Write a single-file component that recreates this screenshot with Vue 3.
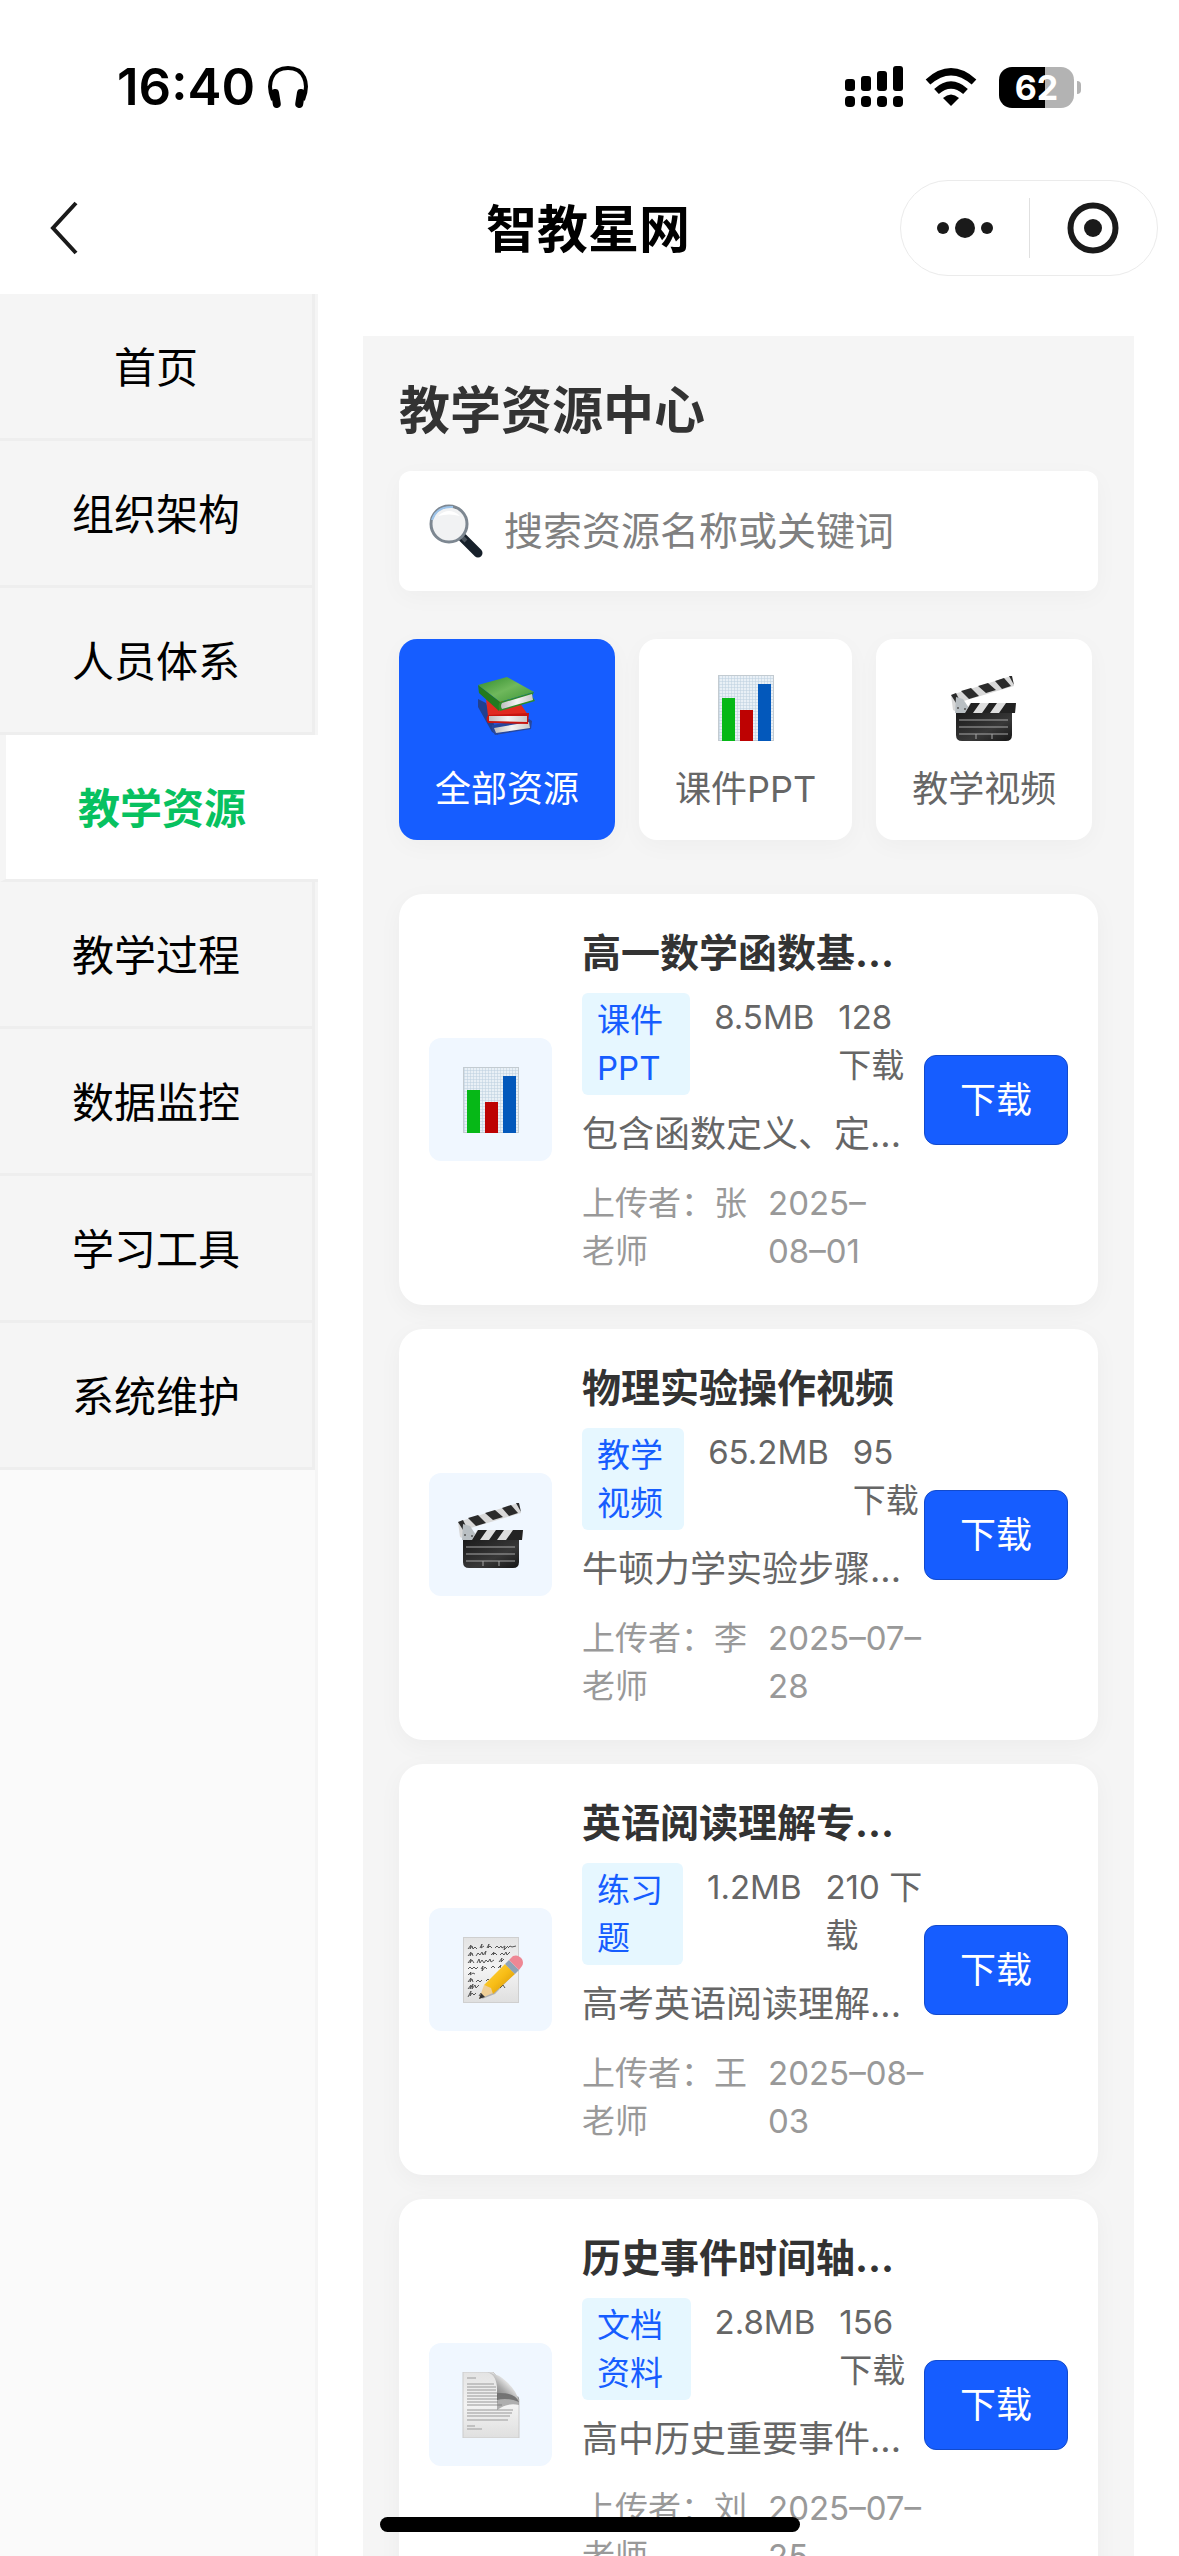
<template>
  <div class="app">
    <!-- shared emoji style icons -->
    <svg class="sprite" aria-hidden="true">
      <defs>
        <linearGradient id="bookGreen" x1="0" y1="0" x2="1" y2="1">
          <stop offset="0" stop-color="#2f8a2b" />
          <stop offset="0.5" stop-color="#6fb85c" />
          <stop offset="1" stop-color="#3c9434" />
        </linearGradient>
        <linearGradient id="pages" x1="0" y1="0" x2="1" y2="0">
          <stop offset="0" stop-color="#bdbdbd" />
          <stop offset="0.5" stop-color="#f4f4f4" />
          <stop offset="1" stop-color="#c8c8c8" />
        </linearGradient>
        <linearGradient id="slate" x1="0" y1="0" x2="1" y2="1">
          <stop offset="0" stop-color="#1b1b1b" />
          <stop offset="0.6" stop-color="#383838" />
          <stop offset="1" stop-color="#161616" />
        </linearGradient>
        <linearGradient id="paper" x1="0" y1="0" x2="0" y2="1">
          <stop offset="0" stop-color="#e3e3e3" />
          <stop offset="0.5" stop-color="#f3f3f3" />
          <stop offset="1" stop-color="#dfdfdf" />
        </linearGradient>
        <linearGradient id="curl" x1="0" y1="1" x2="1" y2="0">
          <stop offset="0" stop-color="#4c4c4c" />
          <stop offset="0.45" stop-color="#a8a8a8" />
          <stop offset="0.7" stop-color="#f4f4f4" />
          <stop offset="1" stop-color="#cfcfcf" />
        </linearGradient>
        <linearGradient id="pencil" x1="0" y1="0" x2="1" y2="1">
          <stop offset="0" stop-color="#ffd84a" />
          <stop offset="0.5" stop-color="#f8bd16" />
          <stop offset="1" stop-color="#c98a08" />
        </linearGradient>
        <pattern id="grid" width="3" height="3" patternUnits="userSpaceOnUse">
          <rect width="3" height="3" fill="#e9f0f6" />
          <path d="M0 0H3M0 0V3" stroke="#bccfdf" stroke-width="1" />
        </pattern>
      </defs>
      <symbol id="icon-books" viewBox="0 0 66 66">
        <path d="M4 24L12 28L24 60L18 57L4 32Z" fill="#21408f" />
        <path d="M12 48L18 50L55 44L58 46L57 54L21 60Q17 55 18 50Z" fill="#27479b" />
        <path d="M20 53L55 47L56 53L22 58Z" fill="url(#pages)" />
        <path d="M12 24L46 28L54 40L14 41Z" fill="#e02a20" />
        <path d="M14 40L55 38L54 49L14 48Q11 44 14 40Z" fill="#c8150f" />
        <path d="M15 41L53 41L53 47L15 46Z" fill="url(#pages)" />
        <path d="M4 10L33 2L60 17L26 27Z" fill="url(#bookGreen)" />
        <path d="M4 10L26 27L25 36L5 18Z" fill="#237a20" />
        <path d="M26 27L60 17L58 21L61 26L26 36Q23 31 26 27Z" fill="#2d8a28" />
        <path d="M28 28L58 19L59 25L28 34Q26 31 28 28Z" fill="url(#pages)" />
      </symbol>
      <symbol id="icon-chart" viewBox="0 0 66 66">
        <rect x="5" width="56" height="66" fill="url(#grid)" />
        <rect x="5.5" y="0.5" width="55" height="65" fill="none" stroke="#c3cbd1" />
        <rect x="9" y="23" width="13" height="43" fill="#06b817" />
        <rect x="27" y="35" width="13" height="31" fill="#bd0202" />
        <rect x="45" y="9" width="13" height="57" fill="#0358bb" />
      </symbol>
      <symbol id="icon-clapper" viewBox="0 0 66 66">
        <path d="M0 20L60 1L63 11L6 28L4 36L2 35Z" fill="#d8d8d8" />
        <path d="M0 20L5 18L9 26L5 28ZM10 16L20 13L28 21L18 24ZM27 11L37 8L45 15L35 18ZM44 6L53 3L60 11L51 14ZM58 1L61 1L63 10Z" fill="#2b2b2b" />
        <path d="M5 22L12 24L18 33L17 38H4Z" fill="#b9bfc3" />
        <circle cx="7" cy="33" r="1" fill="#555" />
        <circle cx="14" cy="34" r="1" fill="#555" />
        <path d="M14 38L19 28H65L64 38Z" fill="#dedede" />
        <path d="M14 38L20 28H29L22 38ZM31 38L38 28H46L39 38ZM48 38L55 28H65L64 38Z" fill="#222" />
        <path d="M5 38H61V60Q61 66 55 66H11Q5 66 5 60Z" fill="url(#slate)" />
        <path d="M8 45H57M8 52H57M8 59H57M25 59V64M41 59V64" stroke="#a6a6a6" stroke-width="1" fill="none" />
      </symbol>
      <symbol id="icon-memo" viewBox="0 0 66 66">
        <rect x="5.5" y="0.5" width="55" height="65" fill="url(#paper)" stroke="#cfcfcf" />
        <path
          d="M10 12l3-4l-1 4l2-3l1 3l2-2l2 2M22 11l2-4l-1 4l3-2M29 11l2-4l-1 4l2-2l2 2M37 11l2-2l2 2l2-2l1 2l3-2l-1 4l4-4M50 11l2-2l2 1l4-1
          M10 19l3-4l-1 4l2-3l1 3M18 19l2-3l2 2l2-3l1 3l3-4l-1 4M33 18l3-3l-1 3l2-2l2 2M42 18l2-2l2 2l2-3l1 3l3-3
          M10 26l3-4l-1 4l2-3l2 3M19 26l2-4l1 4l2-3l2 3l2-3l2 2l2-3l1 3l3-2M41 25l3-4l-1 4l3-3
          M10 32l2-2l2 2l2-2l2 2l2-2M23 32l2-3l-1 5l3-4l2 2M33 31l2-2l2 2M40 31l3-3l-1 3
          M10 38l3-3l-1 3l3-2l2 1
          M10 45l3-4l-1 4l2-3l1 3M18 45l2-2l2 2l2-2M28 44l2-2l2 2
          M10 52l3-4l-1 4l3-5l-1 5l3-4l1 3l3-3M42 51l3-3l2 3
          M10 60l3-6l-1 5l2-3l2 2l2-2M21 59l2-3l2 2"
          fill="none"
          stroke="#555"
          stroke-width="1"
        />
        <path d="M24 62L30 47L51 25L60 33L37 57Z" fill="#000" opacity="0.22" />
        <path d="M21 62L26 48L34 50L35 56Z" fill="#efcf97" />
        <path d="M21 62L23 56L27 60Z" fill="#333" />
        <path d="M26 48L47 27L57 37L35 57L33 51Z" fill="url(#pencil)" />
        <path d="M47 27L51 23L61 33L57 37Z" fill="#8fa3b6" />
        <path d="M51 23L55 19Q60 17 64 22Q66 26 64 29L61 33Z" fill="#ee8794" />
      </symbol>
      <symbol id="icon-doc" viewBox="0 0 66 66">
        <path d="M5 0H35L61 27V66H5Z" fill="url(#paper)" stroke="#cbcbcb" stroke-width="1" />
        <path d="M9 6H18M9 12H36M9 15H38M9 18H38M9 21H39M9 24H40M9 27H40M9 30H40M9 33H44M9 38H55M9 41H54M9 44H52M9 48H50M9 54H17M9 57H24" stroke="#b5b5b5" stroke-width="1.4" fill="none" />
        <path d="M39 16L61 25V33Q50 30 39 38Z" fill="#777" opacity="0.55" />
        <path d="M29 0Q40 3 39 21Q57 20 61 30Q59 19 49 10Q41 2 29 0Z" fill="url(#curl)" />
        <path d="M39 21Q57 20 61 30Q49 25 39 28Z" fill="#5b5b5b" opacity="0.7" />
      </symbol>
    </svg>

    <header class="top">
      <div class="status-bar">
        <div class="status-left">
          <span class="time">16:40</span>
          <svg class="headphones" viewBox="0 0 42 44" aria-hidden="true">
            <path d="M6 35C-1 18 5 3 21 3S43 18 36 35" fill="none" stroke="#000" stroke-width="4" />
            <rect x="5" y="24" width="8" height="19" rx="4" transform="rotate(-9 9 34)" />
            <rect x="29" y="24" width="8" height="19" rx="4" transform="rotate(9 33 34)" />
          </svg>
        </div>
        <div class="status-right">
          <svg class="signal" viewBox="0 0 58 42" aria-hidden="true">
            <rect x="0" y="13" width="10" height="12" rx="3" />
            <rect x="16" y="10" width="10" height="15" rx="3" />
            <rect x="32" y="5" width="10" height="20" rx="3" />
            <rect x="48" y="0" width="10" height="25" rx="3" />
            <rect x="0" y="30" width="10" height="11" rx="4" />
            <rect x="16" y="30" width="10" height="11" rx="4" />
            <rect x="32" y="30" width="10" height="11" rx="4" />
            <rect x="48" y="30" width="10" height="11" rx="4" />
          </svg>
          <svg class="wifi" viewBox="0 0 52 38" aria-hidden="true">
            <path d="M26 38L18 30Q26 23 34 30Z" />
            <path d="M11.500 23.500Q26 10.500 40.500 23.500" fill="none" stroke="#000" stroke-width="7" />
            <path d="M3 14Q26 -6.500 49 14" fill="none" stroke="#000" stroke-width="7" />
          </svg>
          <div class="battery">
            <span class="battery-level">62</span>
            <i class="battery-tip"></i>
          </div>
        </div>
      </div>

      <div class="nav-bar">
        <button class="back-btn" aria-label="返回">
          <svg viewBox="0 0 30 54" aria-hidden="true">
            <path d="M28 2L5 27L28 52" fill="none" stroke="#1a1a1a" stroke-width="4" />
          </svg>
        </button>
        <h1 class="nav-title">智教星网</h1>
        <div class="capsule">
          <button class="capsule-btn" aria-label="更多">
            <svg class="dots" viewBox="0 0 56 20" aria-hidden="true">
              <circle cx="6" cy="10" r="6" />
              <circle cx="28" cy="10" r="10" />
              <circle cx="50" cy="10" r="6" />
            </svg>
          </button>
          <span class="divider"></span>
          <button class="capsule-btn" aria-label="关闭">
            <svg class="ring" viewBox="0 0 52 52" aria-hidden="true">
              <circle cx="26" cy="26" r="22.500" fill="none" stroke="#1a1a1a" stroke-width="6" />
              <circle cx="26" cy="26" r="9" />
            </svg>
          </button>
        </div>
      </div>
    </header>

    <div class="body">
      <nav class="sidebar">
        <button
          v-for="item in menu"
          :key="item"
          class="menu-item"
          :class="{ active: item === currentMenu }"
          @click="currentMenu = item"
        >
          {{ item }}
        </button>
      </nav>

      <main class="content">
        <section class="panel">
          <h2 class="panel-title">教学资源中心</h2>

          <label class="search-box">
            <svg class="search-icon" viewBox="0 0 54 54" aria-hidden="true">
              <path d="M34 34L49 49" stroke="#17202a" stroke-width="9" stroke-linecap="round" />
              <path d="M31 31L37 37" stroke="#4b545d" stroke-width="4" />
              <circle cx="20" cy="20" r="18" fill="#f1f2f3" stroke="#7d8791" stroke-width="3" />
              <path d="M3 16Q8 2 24 3" fill="none" stroke="#9dc4ea" stroke-width="2" />
              <path d="M9 12Q20 2 31 12Q20 9 9 12Z" fill="#fff" />
            </svg>
            <input v-model="keyword" class="search-input" type="text" placeholder="搜索资源名称或关键词" aria-label="搜索资源" />
          </label>

          <div class="tabs">
            <button
              v-for="tab in tabs"
              :key="tab.name"
              class="tab"
              :class="{ active: tab.name === currentTab }"
              @click="currentTab = tab.name"
            >
              <svg class="emoji" aria-hidden="true"><use :href="'#icon-' + tab.icon" /></svg>
              <span>{{ tab.name }}</span>
            </button>
          </div>

          <div class="list">
            <article v-for="res in resources" :key="res.title" class="card">
              <div class="thumb">
                <svg class="emoji" aria-hidden="true"><use :href="'#icon-' + res.icon" /></svg>
              </div>
              <div class="info">
                <h3 class="title">{{ res.title }}</h3>
                <div class="meta">
                  <span class="tag">{{ res.type }}</span>
                  <span>{{ res.size }}</span>
                  <span class="downloads">{{ res.downloads }} 下载</span>
                </div>
                <p class="desc">{{ res.desc }}</p>
                <div class="foot">
                  <span class="uploader">上传者：{{ res.uploader }}</span>
                  <span class="date">{{ res.date }}</span>
                </div>
              </div>
              <button class="download-btn">下载</button>
            </article>
          </div>
        </section>
      </main>
    </div>

    <div class="home-indicator"></div>
  </div>
</template>

<script setup>
import { ref } from "vue";

const menu = ["首页", "组织架构", "人员体系", "教学资源", "教学过程", "数据监控", "学习工具", "系统维护"];
const currentMenu = ref("教学资源");

const keyword = ref("");

const tabs = [
  { name: "全部资源", icon: "books" },
  { name: "课件PPT", icon: "chart" },
  { name: "教学视频", icon: "clapper" }
];
const currentTab = ref("全部资源");

const resources = ref([
  {
    title: "高一数学函数基...",
    type: "课件PPT",
    icon: "chart",
    size: "8.5MB",
    downloads: 128,
    desc: "包含函数定义、定...",
    uploader: "张老师",
    date: "2025–\n08–01"
  },
  {
    title: "物理实验操作视频",
    type: "教学视频",
    icon: "clapper",
    size: "65.2MB",
    downloads: 95,
    desc: "牛顿力学实验步骤...",
    uploader: "李老师",
    date: "2025–07–\n28"
  },
  {
    title: "英语阅读理解专...",
    type: "练习题",
    icon: "memo",
    size: "1.2MB",
    downloads: 210,
    desc: "高考英语阅读理解...",
    uploader: "王老师",
    date: "2025–08–\n03"
  },
  {
    title: "历史事件时间轴...",
    type: "文档资料",
    icon: "doc",
    size: "2.8MB",
    downloads: 156,
    desc: "高中历史重要事件...",
    uploader: "刘老师",
    date: "2025–07–\n25"
  }
]);
</script>

<style>
body {
  margin: 0;
  background: #fff;
}
</style>

<style scoped>
*,
*::before,
*::after {
  box-sizing: border-box;
}

.app {
  display: flex;
  flex-direction: column;
  height: 100vh;
  overflow: hidden;
  background: #fff;
  color: #000;
  font-family: Inter, "Noto Sans CJK SC", sans-serif;
}

.sprite {
  position: absolute;
  width: 0;
  height: 0;
}

button {
  border: none;
  padding: 0;
  background: none;
  font-family: inherit;
  color: inherit;
  cursor: pointer;
}

h1,
h2,
h3,
p {
  margin: 0;
}

svg {
  display: block;
  flex: none;
}

/* status bar */
.status-bar {
  display: flex;
  justify-content: space-between;
  align-items: center;
  height: 174px;
  padding: 0 98px 0 117px;
}

.status-left,
.status-right {
  display: flex;
  align-items: center;
}

.status-left {
  gap: 12px;
}

.status-right {
  gap: 22px;
}

.time {
  font-size: 51px;
  line-height: 60px;
  font-weight: 600;
}

.headphones {
  width: 42px;
  height: 44px;
}

.signal {
  width: 58px;
  height: 42px;
}

.wifi {
  width: 52px;
  height: 38px;
}

.battery {
  display: flex;
  align-items: center;
  gap: 3px;
}

.battery-level {
  width: 75px;
  height: 41px;
  border-radius: 13px;
  background: linear-gradient(90deg, #000 62%, #b3b3b3 62%);
  color: #fff;
  font-size: 34px;
  line-height: 41px;
  font-weight: 700;
  text-align: center;
}

.battery-tip {
  width: 4px;
  height: 13px;
  border-radius: 0 4px 4px 0;
  background: #b3b3b3;
}

/* nav bar */
.nav-bar {
  display: grid;
  grid-template-columns: 1fr auto 1fr;
  align-items: center;
  height: 120px;
  padding: 0 21px 12px 48px;
}

.back-btn {
  justify-self: start;
}

.back-btn svg {
  width: 30px;
  height: 54px;
}

.nav-title {
  padding: 3px 30px 0 0;
  font-size: 51px;
  line-height: 60px;
  font-weight: 700;
}

.capsule {
  display: flex;
  align-items: center;
  justify-self: end;
  width: 258px;
  height: 96px;
  border: 1px solid #ebebeb;
  border-radius: 48px;
}

.capsule-btn {
  display: flex;
  flex: 1;
  justify-content: center;
}

.capsule svg {
  fill: #1a1a1a;
}

.dots {
  width: 56px;
  height: 20px;
}

.ring {
  width: 52px;
  height: 52px;
}

.divider {
  width: 1px;
  height: 60px;
  background: #e0e0e0;
}

/* page body */
.body {
  display: flex;
  flex: 1;
  min-height: 0;
}

.sidebar {
  display: flex;
  flex-direction: column;
  align-items: stretch;
  flex: none;
  width: 318px;
  background: #fafafa;
  border-right: 3px solid #f5f5f5;
}

.menu-item {
  height: 147px;
  padding-top: 3px;
  background: #f5f5f5;
  border-right: 3px solid #eee;
  border-bottom: 3px solid #eee;
  font-size: 42px;
  line-height: 60px;
}

.menu-item.active {
  margin-right: -3px;
  background: #fff;
  border-left: 6px solid #f5f5f5;
  border-right: none;
  color: #07c160;
  font-weight: 700;
}

.content {
  flex: 1;
  min-width: 0;
  padding: 42px 45px 0;
  overflow-y: auto;
  scrollbar-width: none;
}

.panel {
  padding: 36px;
  background: #f5f5f5;
}

.panel-title {
  color: #333;
  font-size: 51px;
  line-height: 78px;
  font-weight: 700;
}

.search-box {
  display: flex;
  align-items: center;
  gap: 21px;
  height: 120px;
  margin-top: 21px;
  padding: 0 30px;
  border-radius: 12px;
  background: #fff;
  box-shadow: 0 6px 24px rgba(0, 0, 0, 0.03);
}

.search-icon {
  width: 54px;
  height: 54px;
}

.search-input {
  flex: 1;
  min-width: 0;
  padding: 0;
  border: none;
  outline: none;
  background: transparent;
  font-family: inherit;
  font-size: 39px;
  line-height: 54px;
}

.search-input::placeholder {
  color: #808080;
}

.tabs {
  display: flex;
  gap: 24px;
  margin-top: 48px;
}

.tab {
  display: flex;
  flex-direction: column;
  align-items: center;
  gap: 21px;
  padding: 36px 36px 24px;
  border-radius: 18px;
  background: #fff;
  box-shadow: 0 6px 24px rgba(0, 0, 0, 0.03);
  color: #666;
  font-size: 36px;
  line-height: 54px;
  white-space: nowrap;
}

.tab.active {
  background: #165dff;
  color: #fff;
}

.emoji {
  width: 66px;
  height: 66px;
}

.list {
  display: flex;
  flex-direction: column;
  gap: 24px;
  margin-top: 54px;
}

.card {
  display: flex;
  align-items: center;
  padding: 30px;
  border-radius: 24px;
  background: #fff;
  box-shadow: 0 6px 24px rgba(0, 0, 0, 0.04);
}

.thumb {
  display: flex;
  align-items: center;
  justify-content: center;
  flex: none;
  width: 123px;
  height: 123px;
  margin-right: 30px;
  border-radius: 12px;
  background: #f0f7ff;
}

.info {
  flex: 1;
  min-width: 0;
}

.title,
.desc {
  overflow: hidden;
  text-overflow: ellipsis;
  white-space: nowrap;
}

.title {
  color: #333;
  font-size: 39px;
  line-height: 57px;
  font-weight: 700;
}

.meta {
  display: flex;
  align-items: flex-start;
  gap: 24px;
  margin-top: 12px;
  color: #666;
  font-size: 33px;
  line-height: 48px;
}

.tag {
  padding: 3px 15px;
  border-radius: 6px;
  background: #e6f7ff;
  color: #165dff;
}

.downloads {
  flex-shrink: 0.85;
}

.desc {
  margin-top: 12px;
  color: #666;
  font-size: 36px;
  line-height: 54px;
}

.foot {
  display: flex;
  gap: 21px;
  margin-top: 18px;
  color: #999;
  font-size: 33px;
  line-height: 48px;
}

.uploader {
  flex: none;
  width: 165px;
}

.date {
  white-space: pre;
}

.download-btn {
  flex: none;
  width: 144px;
  height: 90px;
  border: 1px solid #124acc;
  border-radius: 12px;
  background: #165dff;
  color: #fff;
  font-size: 36px;
  line-height: 54px;
}

.home-indicator {
  position: fixed;
  bottom: 24px;
  left: 50%;
  width: 420px;
  height: 15px;
  border-radius: 8px;
  background: #000;
  transform: translateX(-50%);
}
</style>
